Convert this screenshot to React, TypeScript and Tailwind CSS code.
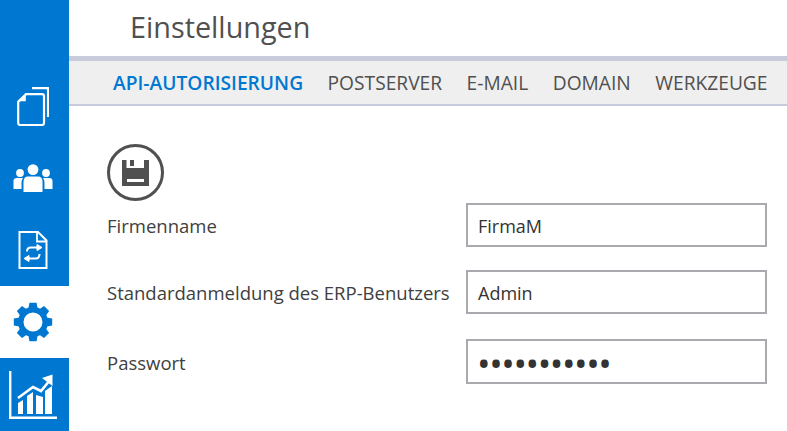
import React from 'react';

const font = { fontFamily: '"Open Sans", "Noto Sans", sans-serif' };

const tabs = ['API-AUTORISIERUNG', 'POSTSERVER', 'E-MAIL', 'DOMAIN', 'WERKZEUGE'];

const PagesIcon = () => (
  <svg width="32" height="39" viewBox="0 0 32 39" fill="none" stroke="white" strokeWidth="2.2">
    <path d="M1.2 15 L9 7.2 H25 a2 2 0 0 1 2 2 V36 a2 2 0 0 1 -2 2 H3.2 a2 2 0 0 1 -2 -2 Z" />
    <path d="M2 13.5 H8 V8 Z" fill="white" strokeWidth="1.6" />
    <path d="M15 1.2 H31 V30" />
  </svg>
);

const UsersIcon = () => (
  <svg width="40" height="29" viewBox="0 0 40 29" fill="white">
    <circle cx="7" cy="9" r="3.9" />
    <circle cx="33" cy="9" r="3.9" />
    <circle cx="20" cy="5.6" r="5.4" />
    <path d="M0.5 25 V17 Q0.5 14 4 14 H10 Q8.5 15.5 8.5 18.5 V25 Z" />
    <path d="M39.5 25 V17 Q39.5 14 36 14 H30 Q31.5 15.5 31.5 18.5 V25 Z" />
    <path d="M10.5 28 V18 Q10.5 12.5 15 12.5 H25 Q29.5 12.5 29.5 18 V28 Z" />
  </svg>
);

const DocSyncIcon = () => (
  <svg width="30" height="38" viewBox="0 0 30 38" fill="none" stroke="white" strokeWidth="2">
    <path d="M1.5 1 H20 L28.5 9.5 V37 H1.5 Z" />
    <path d="M19 1 V10.5 H28.5" strokeWidth="1.8" />
    <path d="M9 20.5 Q9 16.5 13 16.5 H20" strokeWidth="2" />
    <path d="M19 13.5 L24 16.5 L19 19.5 Z" fill="white" strokeWidth="1" />
    <path d="M21.5 23 Q21.5 27.5 17.5 27.5 H10" strokeWidth="2" />
    <path d="M11 24.5 L6 27.5 L11 30.5 Z" fill="white" strokeWidth="1" />
  </svg>
);

const GearIcon = () => (
  <svg width="40" height="40" viewBox="0 0 40 40" fill="#0078d2">
    <circle cx="20" cy="20" r="12.25" fill="none" stroke="#0078d2" strokeWidth="5.5" />
    {[0, 45, 90, 135, 180, 225, 270, 315].map((deg) => (
      <path key={deg} d="M15.4 6.5 L16.4 0.8 H23.6 L24.6 6.5 Z" transform={`rotate(${deg} 20 20)`} />
    ))}
  </svg>
);

const ChartIcon = () => (
  <svg width="48" height="48" viewBox="0 0 48 48" fill="none">
    <path d="M1.2 0 V46.8 H48" stroke="white" strokeWidth="2.4" />
    <path d="M9 27 L24 16 L32 20 L41 9" stroke="white" strokeWidth="2.6" />
    <path d="M33 7 L43.5 3.5 L43.5 15 Z" fill="white" />
    <path d="M9 32 L14 29 V43 H9 Z M18 25 L24 21 V43 H18 Z M27 24 L34 26 V43 H27 Z M36 20 L43 15 V43 H36 Z" fill="white" />
  </svg>
);

const SaveIcon = () => (
  <div className="flex h-[57px] w-[57px] items-center justify-center rounded-full border-[3px] border-[#505050]">
    <svg width="27" height="26" viewBox="0 0 27 26">
      <path
        fill="#505050"
        fillRule="evenodd"
        d="M0 0 H4.5 V8 H22 V0 H27 V26 H0 Z M5 19 V22 H22 V19 Z M8 0 H12 V6 H8 Z"
      />
    </svg>
  </div>
);

const Field = ({ label, value, type = 'text' }: { label: string; value: string; type?: string }) => (
  <div className={type === 'password' ? 'mt-[2px] flex h-[45px] items-center justify-between' : 'flex h-[44px] items-center justify-between'}>
    <span className="pt-[2px] text-[18.5px] text-[#404040]">{label}</span>
    <input
      readOnly
      type={type}
      value={value}
      className={
        type === 'password'
          ? 'h-[45px] w-[301px] border-2 border-[#a9a9ae] bg-white pt-[5px] pl-[9px] text-[36px] tracking-[-1.4px] text-[#333333] outline-none'
          : 'h-[44px] w-[301px] border-2 border-[#a9a9ae] bg-white px-[10px] pt-[2px] text-[18px] text-[#333333] outline-none'
      }
      style={font}
    />
  </div>
);

export default function App() {
  return (
    <div className="flex h-[431px] w-[787px] overflow-hidden bg-white" style={font}>
      {/* Sidebar */}
      <div className="flex h-full w-[69px] shrink-0 flex-col bg-[#0078d2]">
        <div className="h-[70px]" />
        <div className="flex h-[72px] items-center justify-center pr-[3px]"><PagesIcon /></div>
        <div className="flex h-[72px] items-center justify-center pr-[3px]"><UsersIcon /></div>
        <div className="flex h-[72px] items-center justify-center pr-[3px]"><DocSyncIcon /></div>
        <div className="flex h-[72px] items-center justify-center bg-white pr-[3px]"><GearIcon /></div>
        <div className="flex h-[73px] items-center justify-center pr-[3px]"><ChartIcon /></div>
      </div>

      {/* Content */}
      <div className="flex min-w-0 flex-1 flex-col">
        <div className="flex h-[56px] items-center pb-[3px] pl-[61px] text-[28.8px] text-[#505050]">Einstellungen</div>

        <div className="flex h-[50px] items-center gap-[24.5px] border-t-[5px] border-b-2 border-t-[#c8cbdb] border-b-[#c8cbdb] bg-[#efefef] pt-[2px] pl-[44px] text-[19.2px] whitespace-nowrap text-[#505050]">
          {tabs.map((tab, i) => (
            <span key={tab} className={i === 0 ? 'font-semibold text-[#0078d2]' : ''}>{tab}</span>
          ))}
        </div>

        <div className="flex flex-col pt-[38px] pr-[20px] pl-[38px]">
          <SaveIcon />
          <div className="mt-[2px] flex flex-col gap-[23px]">
            <Field label="Firmenname" value="FirmaM" />
            <Field label="Standardanmeldung des ERP-Benutzers" value="Admin" />
            <Field label="Passwort" value="aaaaaaaaaaa" type="password" />
          </div>
        </div>
      </div>
    </div>
  );
}
